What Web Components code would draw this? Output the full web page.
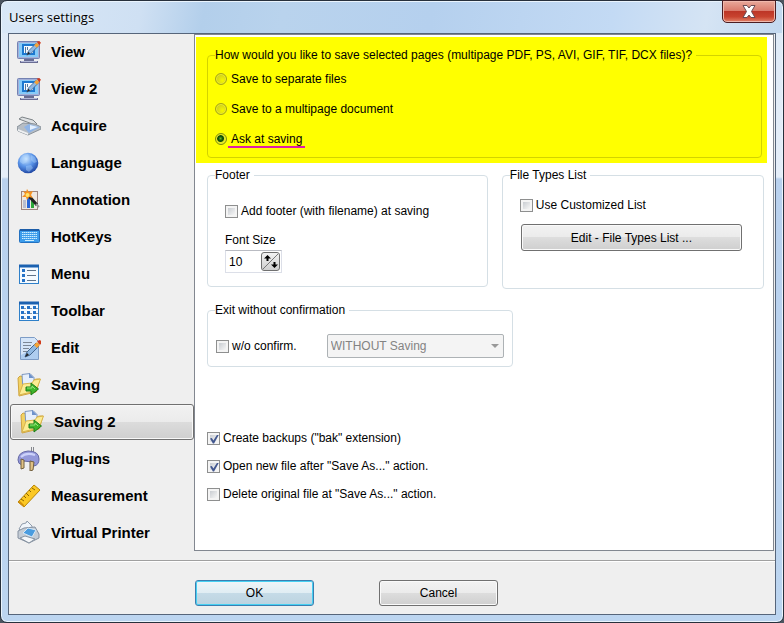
<!DOCTYPE html>
<html lang="en">
<head>
<meta charset="utf-8">
<title>Users settings</title>
<style>
  body {
    margin: 0;
    background: #4c5560;
    color: #000;
    font: 12px/14px "Liberation Sans", Arial, sans-serif;
  }
  .highlight {
    background: #ff0;
    margin: 2px 6px 0 1px;
    padding: 11px 5px 5px 11px;
  }
  .columns {
    display: grid;
    grid-template-columns: 15fr 14fr;
    align-items: start;
    gap: 14px;
    padding: 5px 9px 14px 12px;
  }
  .exit {
    width: fit-content;
    margin-left: 12px;
  }
  .exit-row {
    display: flex;
    align-items: center;
    gap: 30px;
  }
  .stack {
    display: grid;
    gap: 14px;
    padding: 64px 12px 12px;
  }
  number-spinner {
    margin-top: 15px;
  }
  .types push-button {
    margin: 12px 4px 0 1px;
  }
</style>
</head>
<body>

<settings-window caption="Users settings">
  <nav-list slot="nav">
    <nav-item icon="view">View</nav-item>
    <nav-item icon="view">View 2</nav-item>
    <nav-item icon="acquire">Acquire</nav-item>
    <nav-item icon="language">Language</nav-item>
    <nav-item icon="annotation">Annotation</nav-item>
    <nav-item icon="hotkeys">HotKeys</nav-item>
    <nav-item icon="menu">Menu</nav-item>
    <nav-item icon="toolbar">Toolbar</nav-item>
    <nav-item icon="edit">Edit</nav-item>
    <nav-item icon="saving">Saving</nav-item>
    <nav-item icon="saving" selected>Saving 2</nav-item>
    <nav-item icon="plugins">Plug-ins</nav-item>
    <nav-item icon="measurement">Measurement</nav-item>
    <nav-item icon="printer">Virtual Printer</nav-item>
  </nav-list>

  <div class="highlight">
    <group-box caption="How would you like to save selected pages (multipage PDF, PS, AVI, GIF, TIF, DCX files)?" style="--pad: 10px 7px 11px; --line: #d3d300">
      <radio-list name="multipage" value="2" options="Save to separate files|Save to a multipage document|Ask at saving"></radio-list>
    </group-box>
  </div>

  <div class="columns">
    <group-box caption="Footer" style="--pad: 22px 17px 13px">
      <check-option label="Add footer (with filename) at saving"></check-option>
      <number-spinner label="Font Size" value="10"></number-spinner>
    </group-box>
    <group-box class="types" caption="File Types List" style="--pad: 16px 17px 37px">
      <check-option label="Use Customized List"></check-option>
      <push-button>Edit - File Types List ...</push-button>
    </group-box>
  </div>

  <group-box class="exit" caption="Exit without confirmation" style="--pad: 17px 8px 8px">
    <div class="exit-row">
      <check-option label="w/o confirm."></check-option>
      <drop-down label="Exit action" options="WITHOUT Saving|WITH Saving" disabled></drop-down>
    </div>
  </group-box>

  <div class="stack">
    <check-option label='Create backups ("bak" extension)' checked></check-option>
    <check-option label='Open new file after "Save As..." action.' checked></check-option>
    <check-option label='Delete original file at "Save As..." action.'></check-option>
  </div>

  <push-button slot="actions" primary>OK</push-button>
  <push-button slot="actions">Cancel</push-button>
</settings-window>

<script>
const folder = `
  <path d="M1 5l2-2 4 1 3 4 10-2 3 0-4 13-17 4z" fill="#f3d263" stroke="#cfa540"/>
  <path d="M5 1.500l8-1 4 4v9l-11 3z" fill="#e6effb" stroke="#7d97bf"/>
  <path d="M12 0v5h5z" fill="#6f93cb"/>
  <path d="M2 22l4-11 9-1 2-3 6.500-1-4.500 12z" fill="#fcec93" stroke="#d9b44c"/>
  <path d="M9 14h5v-4l7.500 6-7.500 6v-4H9z" fill="#3fb52b" stroke="#1d7d18"/>
  <path d="M10 15h5v-2l3 3" fill="none" stroke="#93e67a"/>`;

const pencil = `
  <path d="M7 17l2-5 9-9 3 3-9 9z" fill="#8fb8e2" stroke="#44668f"/>
  <path d="M7 17l2-4 2 2z" fill="#222"/>
  <path d="M16 5l3-3 3 3-3 3z" fill="#f6a335"/>
  <path d="M19 1l3-1 2 2-2 3z" fill="#d13c1b"/>`;

const icons = {
  view: `
    <rect x=".5" y="1.500" width="22" height="17" rx="1" fill="#a4b0d8" stroke="#7482b2"/>
    <rect x="2" y="3" width="19" height="14" fill="#86caf8"/>
    <rect x="6" y="5" width="11" height="9" fill="#f4faff" stroke="#1c78d0" stroke-width="2"/>
    <path d="M8.500 7v6M10.500 7v3" stroke="#56789f"/>
    <g transform="translate(4 1) scale(.83)">${pencil}</g>
    <path d="M7 19h10v2h4v2H3v-2h4z" fill="#6a6d93"/>
    <path d="M4 21.500h16" stroke="#b3b8d8"/>`,
  acquire: `
    <path d="M2 5l3-2 11 3 4 4-2 1z" fill="#dfe2e4" stroke="#7c8286"/>
    <path d="M0 13l6-4 12 1 6 3v2l-13 6-10-4z" fill="#b6bdc4" stroke="#89929b"/>
    <path d="M7 13l5-3 11 3-11 6z" fill="#8fb4e6"/>
    <path d="M13 11l8 2-8 3z" fill="#e4f0fe"/>
    <path d="M1 15l10 4v2L1 17z" fill="#eef0f2"/>`,
  language: `
    <defs><radialGradient id="g" cx=".4" cy=".3" r=".75">
      <stop offset="0" stop-color="#d0e9ff"/><stop offset=".5" stop-color="#5a94e8"/><stop offset="1" stop-color="#183e9c"/>
    </radialGradient></defs>
    <circle cx="11" cy="12" r="10.300" fill="url(#g)"/>
    <path d="M3 8l3-4 5-1 1 3-3 2 1 3-4 2-3-2zM14 4l4 2 2 5-3 1-3-3zM9 15l5-1 2 3-4 4-3-2z" fill="#b5d9ff" opacity=".4"/>`,
  annotation: `
    <rect x="4.500" y="3.500" width="16" height="18" fill="#eee8e2" stroke="#9d8580"/>
    <path d="M6 12h3v8H6z" fill="#b9bed0"/>
    <path d="M10 10h3v10h-3z" fill="#2765d8"/>
    <path d="M14 12h3v8h-3z" fill="#2ca838"/>
    <path d="M11 7l9 10" stroke="#222" stroke-width="3"/>
    <path d="M19 16l3 3" stroke="#999" stroke-width="2"/>
    <path d="M10 1l2 3 4-1-2 4 2 3-4-1-2 3-1-3-4 0 3-3-2-3 3 1z" fill="#f59222"/>
    <circle cx="10.500" cy="7" r="2" fill="#ffe56a"/>`,
  hotkeys: `
    <rect x="2.500" y="4.500" width="20" height="13" rx="1" fill="#3c9ceb" stroke="#2371c0"/>
    <path d="M3 5h19" stroke="#1c5da8" stroke-width="2"/>
    <path d="M5 7.500h15M5 9.500h15M5 11.500h15M5 13.500h15" stroke="#cdefff" stroke-dasharray="1.500 .5"/>
    <path d="M8 15.500h9" stroke="#cdefff"/>`,
  menu: `
    <rect x="2.500" y="4.500" width="19" height="17" fill="#f4faff" stroke="#2f80c9"/>
    <path d="M2 4h20" stroke="#1b61b0" stroke-width="3"/>
    <path d="M5 7h3v3H5zM5 12h3v3H5zM5 17h3v3H5z" fill="#2472c7"/>
    <path d="M10 8.500h9M10 13.500h9M10 18.500h9" stroke="#5e7288"/>`,
  toolbar: `
    <rect x="2.500" y="4.500" width="19" height="17" fill="#f4faff" stroke="#2f80c9"/>
    <path d="M2 4h20" stroke="#1b61b0" stroke-width="3"/>
    <path d="M4 7h3v3H4zM10 7h3v3h-3zM16 7h3v3h-3zM4 12h3v3H4zM10 12h3v3h-3zM16 12h3v3h-3zM4 17h3v3H4zM10 17h3v3h-3zM16 17h3v3h-3z" fill="#2472c7"/>
    <path d="M7 9.500h2M13 9.500h2M19 9.500h2M7 14.500h2M13 14.500h2M19 14.500h2M7 19.500h2M13 19.500h2" stroke="#8296aa"/>`,
  edit: `
    <path d="M3.500 1.500h14l4 4v18h-18z" fill="#d5e5f8" stroke="#7d9cc6"/>
    <path d="M4 19l17-9v13H4z" fill="#aecdf0"/>
    <path d="M6 6.500h9M6 9.500h8M6 12.500h6M6 15.500h4" stroke="#7c8795"/>
    <g transform="translate(1 4)">${pencil}</g>`,
  saving: folder,
  plugins: `
    <path d="M14.500 0v6M16.500 0v6" stroke="#85878d"/>
    <path d="M1 13q0-8 10-9 11 0 11 8 0 6-5 7l-2-4-8-1-2 4q-4-1-4-5z" fill="#9499da" stroke="#6468a4"/>
    <path d="M4 10q5-5 14-2" fill="none" stroke="#ccd2fa" stroke-width="2"/>
    <path d="M4 12l3 1v8l-3 1zM13 14l4 1-1 8-3 1z" fill="#e0c184" stroke="#73603f"/>`,
  measurement: `
    <path d="M1 18L17 1l6 5L7 23z" fill="#fbc824" stroke="#b88608"/>
    <path d="M1 18l6 5v-2l-4-4z" fill="#d38d0a"/>
    <path d="M4 15l3 2M7 12l2 2M9 9l3 3M12 6l2 2M15 4l3 2" stroke="#8c6500"/>`,
  printer: `
    <path d="M2 8l3-5 4-1 1-2 5 5v5l-7 3z" fill="#f0f5fb" stroke="#8f9cac"/>
    <path d="M1 10l6-3 11-1 4 7v4l-10 5-11-5z" fill="#c4ccd5" stroke="#8590a0"/>
    <path d="M6 12l5-5 8 2-4 7z" fill="#4a9cdf" stroke="#d7e8f6"/>
    <path d="M3 17l5-2 10 3-6 4z" fill="#f5f7f9" stroke="#8793a1"/>`
};

class BaseElement extends HTMLElement {
  constructor() {
    super();
    this._shadowRoot = this.attachShadow({ mode: "open" });
  }
  connectedCallback() {
    this.render();
  }
  // attribute value, safe to put in markup
  attr(name) {
    return (this.getAttribute(name) || "").replace(/&/g, "&amp;").replace(/"/g, "&quot;");
  }
  list(name) {
    return this.attr(name).split("|");
  }
}

class SettingsWindow extends BaseElement {
  render() {
    this._shadowRoot.innerHTML = `
      <style>
        :host {
          display: flex;
          flex-direction: column;
          box-sizing: border-box;
          min-height: 100vh;
          padding: 0 7px 7px;
          border: 1px solid #27303c;
          border-radius: 7px;
          background:
            linear-gradient(100deg, #d9e8f7 0, #cfe0f3 18%, #b3cfeb 26%, #b9d3ed 36%, #b5d0ee 55%, #c3daf4 78%, #d5e4f4 90%, #c2d8ef) 0 0 / 100% 32px no-repeat,
            linear-gradient(#dde9f6 0, #e5eef9 176px, #b9d1ee 178px, #bcd5f0);
          box-shadow: inset 0 0 0 1px #eaf4fd;
        }
        header {
          display: flex;
          justify-content: space-between;
          height: 32px;
        }
        h1 {
          margin: 0;
          padding: 8px 1px;
          font: 13px/16px "Open Sans", "Noto Sans", sans-serif;
          text-shadow: 0 0 6px #fff;
        }
        .close {
          display: grid;
          place-items: center;
          width: 54px;
          height: 23px;
          margin-top: -1px;
          padding: 0;
          border: 1px solid #4b1d22;
          border-radius: 0 0 5px 5px;
          background: linear-gradient(#e9a99b, #d9796a 48%, #bd3627 50%, #c8432f 75%, #e2846a);
          box-shadow: inset 0 0 0 1px #f0b9ad;
        }
        .client {
          flex: 1;
          display: flex;
          flex-direction: column;
          border: 1px solid #56657a;
          background: #efefef;
        }
        main {
          flex: 1;
          display: grid;
          grid-template-columns: 185px 1fr;
          margin-bottom: 9px;
        }
        .page {
          border: 1px solid #828790;
          margin-right: 1px;
          background: #fff;
        }
        footer {
          display: flex;
          gap: 65px;
          padding: 19px 0 8px 186px;
          border-top: 1px solid #a0a0a0;
          box-shadow: inset 0 1px #fff;
        }
        footer ::slotted(*) {
          --height: 26px;
          width: 119px;
        }
      </style>
      <header>
        <h1>${this.attr("caption")}</h1>
        <button class="close" aria-label="Close">
          <svg width="14" height="13" viewBox="0 0 14 13">
            <path d="M1 .5h4l2 2.500L9 .5h4L9.500 6.500l3.500 6H9L7 10l-2 2.500H1l3.500-6z" fill="#fff" stroke="#6a4a52"/>
          </svg>
        </button>
      </header>
      <div class="client">
        <main>
          <slot name="nav"></slot>
          <section class="page"><slot></slot></section>
        </main>
        <footer><slot name="actions"></slot></footer>
      </div>
    `;
  }
}

class NavList extends BaseElement {
  render() {
    this._shadowRoot.innerHTML = `
      <style>
        :host { display: block; }
        nav { display: grid; gap: 1px; padding-left: 1px; }
      </style>
      <nav><slot></slot></nav>
    `;
  }
}

class NavItem extends BaseElement {
  render() {
    this._shadowRoot.innerHTML = `
      <style>
        :host { display: block; }
        button {
          display: flex;
          align-items: center;
          gap: 10px;
          box-sizing: border-box;
          width: 100%;
          height: 36px;
          padding: 0 6px;
          border: 1px solid transparent;
          border-radius: 3px;
          background: none;
          color: inherit;
          font: bold 15px/18px "Liberation Sans", Arial, sans-serif;
          text-align: left;
        }
        :host([selected]) button {
          padding-left: 9px;
          border-color: #707070;
          background: linear-gradient(#f2f2f2, #ebebeb 49%, #dcdcdc 50%, #cfcfcf);
          box-shadow: inset 0 0 0 1px #f8f8f8;
        }
      </style>
      <button>
        <svg width="24" height="24" viewBox="0 0 24 24" aria-hidden="true">${icons[this.getAttribute("icon")]}</svg>
        <slot></slot>
      </button>
    `;
  }
}

class GroupBox extends BaseElement {
  render() {
    this._shadowRoot.innerHTML = `
      <style>
        :host { display: block; }
        fieldset {
          min-width: 0;
          margin: 0;
          padding: 0;
          border: 1px solid var(--line, #d5dfe5);
          border-radius: 4px;
        }
        legend {
          margin-left: 7px;
          padding: 0 4px 0 0;
        }
        .body { padding: var(--pad, 16px); }
      </style>
      <fieldset>
        <legend>${this.attr("caption")}</legend>
        <div class="body"><slot></slot></div>
      </fieldset>
    `;
  }
}

class RadioList extends BaseElement {
  render() {
    const name = this.attr("name");
    const value = Number(this.getAttribute("value"));
    this._shadowRoot.innerHTML = `
      <style>
        :host { display: grid; gap: 16px; justify-items: start; }
        label { display: flex; align-items: center; gap: 1px; }
        input {
          appearance: none;
          box-sizing: border-box;
          width: 12px;
          height: 12px;
          margin: 0;
          border: 1px solid #a3a31c;
          border-radius: 50%;
          background: radial-gradient(circle at 65% 65%, #f6f600, #d0d01c 70%);
          box-shadow: inset 0 0 0 1px #eded30;
        }
        input:checked {
          border-color: #7c8a10;
          background: radial-gradient(circle at 45% 45%, #63b52e 0, #14580a 2px, #104a08 3px, #e0e820 4px);
        }
        span { padding: 0 3px; }
        input:checked + span { box-shadow: 0 2px #e01ea8; }
      </style>
      ${this.list("options").map((text, i) => `
        <label><input type="radio" name="${name}"${i === value ? " checked" : ""}><span>${text}</span></label>
      `).join("")}
    `;
  }
}

class CheckOption extends BaseElement {
  render() {
    this._shadowRoot.innerHTML = `
      <style>
        :host { display: block; }
        label { display: flex; align-items: center; gap: 3px; width: fit-content; }
        input {
          display: grid;
          place-items: center;
          appearance: none;
          box-sizing: border-box;
          width: 13px;
          height: 13px;
          margin: 0;
          padding: 2px;
          border: 1px solid #8e8f8f;
          background: linear-gradient(135deg, #c9cdd2, #f6f6f6) content-box, #f4f4f4;
        }
        input:checked::before {
          content: "";
          width: 9px;
          height: 9px;
          background: #42578f;
          clip-path: polygon(0 45%, 20% 40%, 38% 68%, 80% 0, 100% 0, 45% 100%, 32% 100%);
        }
      </style>
      <label><input type="checkbox"${this.hasAttribute("checked") ? " checked" : ""}>${this.attr("label")}</label>
    `;
  }
}

class NumberSpinner extends BaseElement {
  render() {
    this._shadowRoot.innerHTML = `
      <style>
        :host { display: grid; gap: 3px; justify-items: start; }
        .box {
          display: flex;
          align-items: center;
          box-sizing: border-box;
          width: 57px;
          height: 23px;
          padding-right: 1px;
          border: 1px solid #dcdfe8;
          border-top-color: #b9bbc2;
        }
        input {
          flex: 1;
          min-width: 0;
          padding: 0 3px;
          border: 0;
          background: none;
          font: inherit;
        }
        button {
          display: grid;
          width: 19px;
          height: 19px;
          padding: 0;
          border: 1px solid #707070;
          border-radius: 3px;
          background: linear-gradient(#f2f2f2, #cfcfcf);
        }
      </style>
      <label for="value">${this.attr("label")}</label>
      <div class="box">
        <input id="value" type="text" value="${this.attr("value")}">
        <button aria-label="Change value">
          <svg width="17" height="17" viewBox="0 0 17 17">
            <path d="M1 16L16 1" stroke="#777"/>
            <path d="M5.500 2L9 5.500H6.500V8h-2V5.500H2zM12.500 15L9 11.500h2.500V9h2v2.500H16z" fill="#000"/>
          </svg>
        </button>
      </div>
    `;
  }
}

class DropDown extends BaseElement {
  render() {
    this._shadowRoot.innerHTML = `
      <style>
        :host { display: grid; width: 177px; }
        select, svg { grid-area: 1 / 1; }
        select {
          appearance: none;
          height: 24px;
          padding: 0 3px;
          border: 1px solid #adb2b5;
          border-radius: 2px;
          background: #f4f4f4;
          color: #838383;
          opacity: 1;
          font: inherit;
        }
        svg { place-self: center end; margin-right: 5px; pointer-events: none; }
      </style>
      <select aria-label="${this.attr("label")}"${this.hasAttribute("disabled") ? " disabled" : ""}>
        ${this.list("options").map(text => `<option>${text}</option>`).join("")}
      </select>
      <svg width="8" height="4" viewBox="0 0 8 4"><path d="M0 0h8L4 4z" fill="#999"/></svg>
    `;
  }
}

class PushButton extends BaseElement {
  render() {
    this._shadowRoot.innerHTML = `
      <style>
        :host { display: block; }
        button {
          width: 100%;
          height: var(--height, 27px);
          padding: 0;
          border: 1px solid #707070;
          border-radius: 3px;
          background: linear-gradient(#f2f2f2, #ebebeb 49%, #dddddd 50%, #cfcfcf);
          box-shadow: inset 0 0 0 1px #fafafa;
          color: inherit;
          font: inherit;
        }
        :host([primary]) button {
          border-color: #3c7fb1;
          background: linear-gradient(#eff5f8, #e0edf3 49%, #c5dbe7 50%, #bcd3e0);
          box-shadow: inset 0 0 0 1px #46d0f2;
        }
      </style>
      <button><slot></slot></button>
    `;
  }
}

customElements.define("settings-window", SettingsWindow);
customElements.define("nav-list", NavList);
customElements.define("nav-item", NavItem);
customElements.define("group-box", GroupBox);
customElements.define("radio-list", RadioList);
customElements.define("check-option", CheckOption);
customElements.define("number-spinner", NumberSpinner);
customElements.define("drop-down", DropDown);
customElements.define("push-button", PushButton);
</script>
</body>
</html>
